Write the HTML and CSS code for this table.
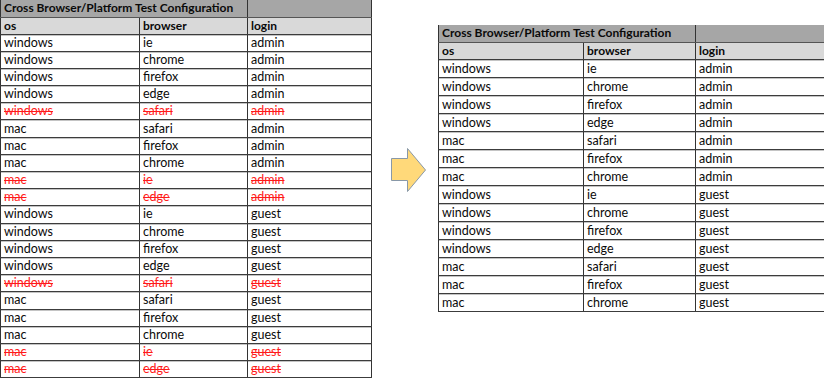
FILE: index.html
```html
<!DOCTYPE html>
<html>
<head>
<meta charset="utf-8">
<link rel="stylesheet" href="styles.css">
</head>
<body>
<div class="page">
  <table class="sheet sheet-src">
    <colgroup><col class="c1"><col class="c2"><col class="c3"></colgroup>
    <tr class="title"><td colspan="2">Cross Browser/Platform Test Configuration</td><td></td></tr>
    <tr class="head"><td>os</td><td>browser</td><td>login</td></tr>
    <tr><td>windows</td><td>ie</td><td>admin</td></tr>
    <tr><td>windows</td><td>chrome</td><td>admin</td></tr>
    <tr><td>windows</td><td>firefox</td><td>admin</td></tr>
    <tr><td>windows</td><td>edge</td><td>admin</td></tr>
    <tr class="gone"><td>windows</td><td>safari</td><td>admin</td></tr>
    <tr><td>mac</td><td>safari</td><td>admin</td></tr>
    <tr><td>mac</td><td>firefox</td><td>admin</td></tr>
    <tr><td>mac</td><td>chrome</td><td>admin</td></tr>
    <tr class="gone"><td>mac</td><td>ie</td><td>admin</td></tr>
    <tr class="gone"><td>mac</td><td>edge</td><td>admin</td></tr>
    <tr><td>windows</td><td>ie</td><td>guest</td></tr>
    <tr><td>windows</td><td>chrome</td><td>guest</td></tr>
    <tr><td>windows</td><td>firefox</td><td>guest</td></tr>
    <tr><td>windows</td><td>edge</td><td>guest</td></tr>
    <tr class="gone"><td>windows</td><td>safari</td><td>guest</td></tr>
    <tr><td>mac</td><td>safari</td><td>guest</td></tr>
    <tr><td>mac</td><td>firefox</td><td>guest</td></tr>
    <tr><td>mac</td><td>chrome</td><td>guest</td></tr>
    <tr class="gone"><td>mac</td><td>ie</td><td>guest</td></tr>
    <tr class="gone"><td>mac</td><td>edge</td><td>guest</td></tr>
  </table>

  <svg class="arrow" width="40" height="50" viewBox="0 0 40 50">
    <polygon points="2.5,13.5 18.5,13.5 18.5,3.5 36.5,25 18.5,46.5 18.5,35.5 2.5,35.5" fill="#ffd97a" stroke="#8898a8" stroke-width="1"/>
  </svg>

  <table class="sheet sheet-out">
    <colgroup><col class="c1"><col class="c2"><col class="c3"></colgroup>
    <tr class="title"><td colspan="2">Cross Browser/Platform Test Configuration</td><td></td></tr>
    <tr class="head"><td>os</td><td>browser</td><td>login</td></tr>
    <tr><td>windows</td><td>ie</td><td>admin</td></tr>
    <tr><td>windows</td><td>chrome</td><td>admin</td></tr>
    <tr><td>windows</td><td>firefox</td><td>admin</td></tr>
    <tr><td>windows</td><td>edge</td><td>admin</td></tr>
    <tr><td>mac</td><td>safari</td><td>admin</td></tr>
    <tr><td>mac</td><td>firefox</td><td>admin</td></tr>
    <tr><td>mac</td><td>chrome</td><td>admin</td></tr>
    <tr><td>windows</td><td>ie</td><td>guest</td></tr>
    <tr><td>windows</td><td>chrome</td><td>guest</td></tr>
    <tr><td>windows</td><td>firefox</td><td>guest</td></tr>
    <tr><td>windows</td><td>edge</td><td>guest</td></tr>
    <tr><td>mac</td><td>safari</td><td>guest</td></tr>
    <tr><td>mac</td><td>firefox</td><td>guest</td></tr>
    <tr><td>mac</td><td>chrome</td><td>guest</td></tr>
  </table>
</div>
</body>
</html>
```

FILE: styles.css
```css
html, body {
  margin: 0;
  padding: 0;
  background: #ffffff;
}

.page {
  display: flex;
  align-items: flex-start;
  width: 824px;
  height: 379px;
  overflow: hidden;
  font-family: Lato, "Open Sans", "Liberation Sans", sans-serif;
  font-size: 12.5px;
  color: #0a0a0a;
}

.sheet {
  border-collapse: collapse;
  table-layout: fixed;
  flex: none;
}

.sheet td {
  padding: 0 0 0 3px;
  border-left: 1px solid #333333;
  border-bottom: 1px solid #3c3c3c;
  box-shadow: inset 0 1px 0 #c4c4c4;
  white-space: nowrap;
  overflow: hidden;
  vertical-align: middle;
  line-height: 14px;
}

.sheet td:last-child {
  border-right: 1px solid #333333;
}

.sheet .title td {
  background: #a6a6a6;
  font-weight: bold;
  font-size: 12px;
  box-shadow: none;
  border-bottom-color: #555555;
}

.sheet .head td {
  background: #d9d9d9;
  font-weight: bold;
  font-size: 12px;
  box-shadow: none;
}

.sheet .gone td {
  color: #ff1a1a;
  text-decoration: line-through;
  text-decoration-thickness: 1px;
}

/* source sheet */
.sheet-src {
  width: 371px;
}
.sheet-src .c1 { width: 139px; }
.sheet-src .c2 { width: 108px; }
.sheet-src .c3 { width: 124px; }
.sheet-src tr { height: 17.2px; }
.sheet-src .title, .sheet-src .head { height: 17px; }

/* arrow */
.arrow {
  flex: none;
  display: block;
  margin: 145px 0 0 17px;
}

/* output sheet */
.sheet-out {
  width: 386px;
  margin: 25px 0 0 9px;
}
.sheet-out .c1 { width: 145px; }
.sheet-out .c2 { width: 112px; }
.sheet-out .c3 { width: 129px; }
.sheet-out tr { height: 18px; }
.sheet-out .title { height: 17px; }
.sheet-out .head { height: 17.5px; }
```
